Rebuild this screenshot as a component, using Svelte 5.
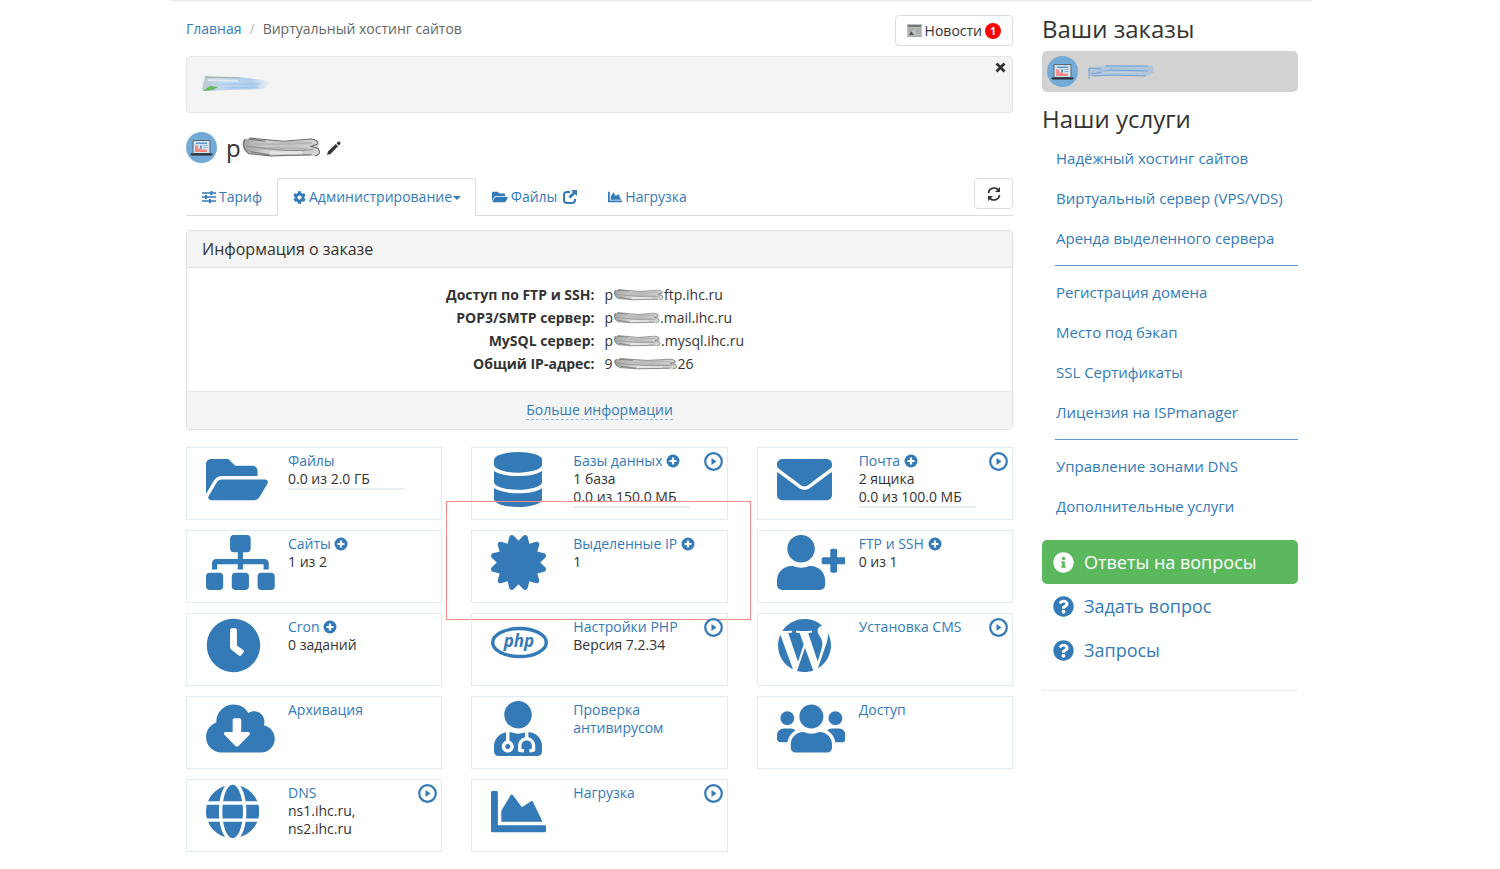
<script lang="ts">
  const icons = {
    folder: {
      w: 576,
      d: "M572.694 292.093L500.27 416.248A63.997 63.997 0 0 1 444.989 448H45.025c-18.523 0-30.064-20.093-20.731-36.093l72.424-124.155A64 64 0 0 1 152 256h399.964c18.523 0 30.064 20.093 20.73 36.093zM152 224h328v-48c0-26.51-21.49-48-48-48H272l-64-64H48C21.49 64 0 85.49 0 112v278.046l69.077-118.418C86.214 242.25 117.989 224 152 224z",
    },
    database: {
      w: 448,
      d: "M448 73.143v45.714C448 159.143 347.667 192 224 192S0 159.143 0 118.857V73.143C0 32.857 100.333 0 224 0s224 32.857 224 73.143zM448 176v102.857C448 319.143 347.667 352 224 352S0 319.143 0 278.857V176c48.125 33.143 136.208 48.572 224 48.572S399.874 209.143 448 176zm0 160v102.857C448 479.143 347.667 512 224 512S0 479.143 0 438.857V336c48.125 33.143 136.208 48.572 224 48.572S399.874 369.143 448 336z",
    },
    envelope: {
      w: 512,
      d: "M502.3 190.8c3.9-3.1 9.7-.2 9.7 4.7V400c0 26.5-21.5 48-48 48H48c-26.5 0-48-21.5-48-48V195.6c0-5 5.7-7.8 9.7-4.7 22.4 17.4 52.1 39.5 154.1 113.6 21.1 15.4 56.7 47.8 92.2 47.6 35.7.3 72-32.8 92.3-47.6 102-74.1 131.6-96.3 154-113.7zM256 320c23.2.4 56.6-29.2 73.4-41.4 132.7-96.3 142.8-104.7 173.4-128.7 5.8-4.5 9.2-11.5 9.2-18.9v-19c0-26.5-21.5-48-48-48H48c-26.5 0-48 21.5-48 48v19c0 7.4 3.4 14.3 9.2 18.9 30.6 23.9 40.7 32.4 173.4 128.7 16.8 12.2 50.2 41.8 73.4 41.4z",
    },
    sitemap: {
      w: 640,
      d: "M128 352H32c-17.67 0-32 14.33-32 32v96c0 17.67 14.33 32 32 32h96c17.67 0 32-14.33 32-32v-96c0-17.67-14.33-32-32-32zm-24-80h192v48h48v-48h192v48h48v-57.59c0-21.17-17.23-38.41-38.41-38.41H344v-64h40c17.67 0 32-14.33 32-32V32c0-17.67-14.33-32-32-32H256c-17.67 0-32 14.33-32 32v96c0 17.67 14.33 32 32 32h40v64H94.41C73.23 224 56 241.23 56 262.41V320h48v-48zm264 80h-96c-17.67 0-32 14.33-32 32v96c0 17.67 14.33 32 32 32h96c17.67 0 32-14.33 32-32v-96c0-17.67-14.33-32-32-32zm240 0h-96c-17.67 0-32 14.33-32 32v96c0 17.67 14.33 32 32 32h96c17.67 0 32-14.33 32-32v-96c0-17.67-14.33-32-32-32z",
    },
    certificate: {
      w: 512,
      d: "M458.622 255.92l45.985-45.005c13.708-12.977 7.316-36.039-10.664-40.339l-62.65-15.99 17.661-62.015c4.991-17.838-11.829-34.663-29.661-29.671l-61.994 17.667-15.984-62.671C337.085.197 313.765-6.276 300.99 7.228L256 53.57 211.011 7.229c-12.63-13.351-36.047-7.234-40.325 10.668l-15.984 62.671-61.995-17.667C74.87 57.907 58.056 74.738 63.046 92.572l17.661 62.015-62.65 15.99C.069 174.878-6.31 197.944 7.392 210.915l45.985 45.005-45.985 45.004c-13.708 12.977-7.316 36.039 10.664 40.339l62.65 15.99-17.661 62.015c-4.991 17.838 11.829 34.663 29.661 29.671l61.994-17.667 15.984 62.671c4.439 18.575 27.696 24.018 40.325 10.668L256 458.61l44.989 46.001c12.5 13.488 35.987 7.486 40.325-10.668l15.984-62.671 61.994 17.667c17.836 4.994 34.651-11.837 29.661-29.671l-17.661-62.015 62.65-15.99c17.987-4.302 24.366-27.367 10.664-40.339l-45.984-45.004z",
    },
    userPlus: {
      w: 640,
      d: "M624 208h-64v-64c0-8.8-7.2-16-16-16h-32c-8.8 0-16 7.2-16 16v64h-64c-8.8 0-16 7.2-16 16v32c0 8.8 7.2 16 16 16h64v64c0 8.8 7.2 16 16 16h32c8.8 0 16-7.2 16-16v-64h64c8.8 0 16-7.2 16-16v-32c0-8.8-7.2-16-16-16zm-400 48c70.7 0 128-57.3 128-128S294.7 0 224 0 96 57.3 96 128s57.3 128 128 128zm89.6 32h-16.7c-22.2 10.2-46.9 16-72.9 16s-50.6-5.8-72.9-16h-16.7C60.2 288 0 348.2 0 422.4V464c0 26.5 21.5 48 48 48h352c26.5 0 48-21.5 48-48v-41.6c0-74.2-60.2-134.4-134.4-134.4z",
    },
    clock: {
      w: 512,
      d: "M256,8C119,8,8,119,8,256S119,504,256,504,504,393,504,256,393,8,256,8Zm92.49,313h0l-20,25a16,16,0,0,1-22.49,2.5h0l-67-49.72a40,40,0,0,1-15-31.23V112a16,16,0,0,1,16-16h32a16,16,0,0,1,16,16V256l58,42.5A16,16,0,0,1,348.49,321Z",
    },
    wordpress: {
      w: 512,
      box: "35 35 442 442",
      d: "M61.7 169.4l101.5 278C92.2 413 43.3 340.2 43.3 256c0-30.9 6.6-60.1 18.4-86.6zm337.9 75.9c0-26.3-9.4-44.5-17.5-58.7-10.8-17.5-20.9-32.4-20.9-49.9 0-19.6 14.8-37.8 35.7-37.8.9 0 1.8.1 2.8.2-37.9-34.7-88.3-55.9-143.7-55.9-74.3 0-139.7 38.1-177.8 95.9 5 .2 9.7.3 13.7.3 22.2 0 56.7-2.7 56.7-2.7 11.5-.7 12.8 16.2 1.4 17.5 0 0-11.5 1.3-24.3 2l77.5 230.4L249.8 247l-33.1-90.8c-11.5-.7-22.3-2-22.3-2-11.5-.7-10.1-18.2 1.3-17.5 0 0 35.1 2.7 56 2.7 22.2 0 56.7-2.7 56.7-2.7 11.5-.7 12.8 16.2 1.4 17.5 0 0-11.5 1.3-24.3 2l76.9 228.7 21.2-70.9c9-29.4 16-50.5 16-68.7zm-139.9 29.3l-63.8 185.5c19.1 5.6 39.2 8.7 60.1 8.7 24.8 0 48.5-4.3 70.6-12.1-.6-.9-1.1-1.9-1.5-2.9l-65.4-179.2zm183-120.7c.9 6.8 1.4 14 1.4 21.9 0 21.6-4 45.8-16.2 76.2l-65 187.9C426.2 403 468.7 334.5 468.7 256c0-37-9.4-71.8-26-102.1z",
    },
    cloud: {
      w: 640,
      d: "M537.6 226.6c4.1-10.7 6.4-22.4 6.4-34.6 0-53-43-96-96-96-19.7 0-38.1 6-53.3 16.2C367 64.2 315.3 32 256 32c-88.4 0-160 71.6-160 160 0 2.7.1 5.4.2 8.1C40.2 219.8 0 273.2 0 336c0 79.5 64.5 144 144 144h368c70.7 0 128-57.3 128-128 0-61.9-44-113.6-102.4-125.4zm-132.9 88.7L299.3 420.7c-6.2 6.2-16.4 6.2-22.6 0L171.3 315.3c-10.1-10.1-2.9-27.3 11.3-27.3H248V176c0-8.8 7.2-16 16-16h48c8.8 0 16 7.2 16 16v112h65.4c14.2 0 21.4 17.2 11.3 27.3z",
    },
    doctor: {
      w: 448,
      d: "M224 256c70.7 0 128-57.3 128-128S294.7 0 224 0 96 57.3 96 128s57.3 128 128 128zM104 424c0 13.3 10.7 24 24 24s24-10.7 24-24-10.7-24-24-24-24 10.7-24 24zm216-135.4v49c36.5 7.4 64 39.8 64 78.4v41.7c0 7.6-5.4 14.2-12.9 15.7l-32.2 6.4c-4.3.9-8.5-1.9-9.4-6.3l-3.1-15.7c-.9-4.3 1.9-8.6 6.3-9.4l19.3-3.9V416c0-62.8-96-65.1-96 1.9v26.7l19.3 3.9c4.3.9 7.1 5.1 6.3 9.4l-3.1 15.7c-.9 4.3-5.1 7.1-9.4 6.3l-31.2-4.2c-7.9-1.1-13.8-7.8-13.8-15.9V416c0-38.6 27.5-70.9 64-78.4v-45.2c-2.2.7-4.4 1.1-6.6 1.9-18 6.3-37.3 9.8-57.4 9.8s-39.4-3.5-57.4-9.8c-7.4-2.6-14.9-4.2-22.6-5.2v81.6c23.1 6.9 40 28.1 40 53.4 0 30.9-25.1 56-56 56s-56-25.1-56-56c0-25.3 16.9-46.5 40-53.4v-80.4C48.5 301 0 355.8 0 422.4v44.8C0 491.9 20.1 512 44.8 512h358.4c24.7 0 44.8-20.1 44.8-44.8v-44.8c0-72-56.8-130.3-128-133.8z",
    },
    users: {
      w: 640,
      d: "M96 224c35.3 0 64-28.7 64-64s-28.7-64-64-64-64 28.7-64 64 28.7 64 64 64zm448 0c35.3 0 64-28.7 64-64s-28.7-64-64-64-64 28.7-64 64 28.7 64 64 64zm32 32h-64c-17.6 0-33.5 7.1-45.1 18.6 40.3 22.1 68.9 62 75.1 109.4h66c17.7 0 32-14.3 32-32v-32c0-35.3-28.7-64-64-64zm-256 0c61.9 0 112-50.1 112-112S381.9 32 320 32 208 82.1 208 144s50.1 112 112 112zm76.8 32h-8.3c-20.8 10-43.9 16-68.5 16s-47.6-6-68.5-16h-8.3C179.6 288 128 339.6 128 403.2V432c0 26.5 21.5 48 48 48h288c26.5 0 48-21.5 48-48v-28.8c0-63.6-51.6-115.2-115.2-115.2zm-223.7-13.4C161.5 263.1 145.6 256 128 256H64c-35.3 0-64 28.7-64 64v32c0 17.7 14.3 32 32 32h65.9c6.3-47.4 34.9-87.3 75.2-109.4z",
    },
    globe: {
      w: 496,
      d: "M336.5 160C322 70.7 287.8 8 248 8s-74 62.7-88.5 152h177zM152 256c0 22.2 1.2 43.5 3.3 64h185.3c2.1-20.5 3.3-41.8 3.3-64s-1.2-43.5-3.3-64H155.3c-2.1 20.5-3.3 41.8-3.3 64zm324.7-96c-28.6-67.9-86.5-120.4-158-141.6 24.4 33.8 41.2 84.7 50 141.6h108zM177.2 18.4C105.8 39.6 47.8 92.1 19.3 160h108c8.7-56.9 25.5-107.8 49.9-141.6zM487.4 192H372.7c2.1 21 3.3 42.5 3.3 64s-1.2 43-3.3 64h114.6c5.5-20.5 8.6-41.8 8.6-64s-3.1-43.5-8.5-64zM120 256c0-21.5 1.2-43 3.3-64H8.6C3.2 212.5 0 233.8 0 256s3.2 43.5 8.6 64h114.6c-2-21-3.2-42.5-3.2-64zm39.5 96c14.5 89.3 48.7 152 88.5 152s74-62.7 88.5-152h-177zm159.3 141.6c71.4-21.2 129.4-73.7 158-141.6h-108c-8.8 56.9-25.6 107.8-50 141.6zM19.3 352c28.6 67.9 86.5 120.4 158 141.6-24.4-33.8-41.2-84.7-50-141.6h-108z",
    },
    chart: {
      w: 512,
      d: "M500 384c6.6 0 12 5.4 12 12v40c0 6.6-5.4 12-12 12H12c-6.6 0-12-5.4-12-12V76c0-6.6 5.4-12 12-12h40c6.6 0 12 5.4 12 12v308h436zM372.7 159.5L288 216l-85.3-113.7c-5.1-6.8-15.5-6.3-19.9 1L96 248v104h384l-89.9-187.8c-3.2-6.5-11.4-8.7-17.4-4.7z",
    },
    cog: {
      w: 512,
      d: "M487.4 315.7l-42.6-24.6c4.3-23.2 4.3-47 0-70.2l42.6-24.6c4.9-2.8 7.1-8.6 5.5-14-11.1-35.6-30-67.8-54.7-94.6-3.8-4.1-10-5.1-14.8-2.3L380.8 110c-17.9-15.4-38.5-27.3-60.8-35.1V25.8c0-5.6-3.9-10.5-9.4-11.7-36.7-8.2-74.3-7.8-109.2 0-5.5 1.2-9.4 6.1-9.4 11.7V75c-22.2 7.9-42.8 19.8-60.8 35.1L88.7 85.5c-4.9-2.8-11-1.9-14.8 2.3-24.7 26.7-43.6 58.9-54.7 94.6-1.7 5.4.6 11.2 5.5 14L67.3 221c-4.3 23.2-4.3 47 0 70.2l-42.6 24.6c-4.9 2.8-7.1 8.6-5.5 14 11.1 35.6 30 67.8 54.7 94.6 3.8 4.1 10 5.1 14.8 2.3l42.6-24.6c17.9 15.4 38.5 27.3 60.8 35.1v49.2c0 5.6 3.9 10.5 9.4 11.7 36.7 8.2 74.3 7.8 109.2 0 5.5-1.2 9.4-6.1 9.4-11.7v-49.2c22.2-7.9 42.8-19.8 60.8-35.1l42.6 24.6c4.9 2.8 11 1.9 14.8-2.3 24.7-26.7 43.6-58.9 54.7-94.6 1.5-5.5-.7-11.3-5.6-14.1zM256 336c-44.1 0-80-35.9-80-80s35.9-80 80-80 80 35.9 80 80-35.9 80-80 80z",
    },
    question: {
      w: 512,
      d: "M504 256c0 136.997-111.043 248-248 248S8 392.997 8 256C8 119.083 119.043 8 256 8s248 111.083 248 248zM262.655 90c-54.497 0-89.255 22.957-116.549 63.758-3.536 5.286-2.353 12.415 2.715 16.258l34.699 26.31c5.205 3.947 12.621 3.008 16.665-2.122 17.864-22.658 30.113-35.797 57.303-35.797 20.429 0 45.698 13.148 45.698 32.958 0 14.976-12.363 22.667-32.534 33.976C247.128 238.528 216 254.941 216 296v4c0 6.627 5.373 12 12 12h56c6.627 0 12-5.373 12-12v-1.333c0-28.462 83.186-29.647 83.186-106.667 0-58.002-60.165-102-116.531-102zM256 338c-25.365 0-46 20.635-46 46 0 25.364 20.635 46 46 46s46-20.636 46-46c0-25.365-20.635-46-46-46z",
    },
    info: {
      w: 512,
      d: "M256 8C119.043 8 8 119.083 8 256c0 136.997 111.043 248 248 248s248-111.003 248-248C504 119.083 392.957 8 256 8zm0 110c23.196 0 42 18.804 42 42s-18.804 42-42 42-42-18.804-42-42 18.804-42 42-42zm56 254c0 6.627-5.373 12-12 12h-88c-6.627 0-12-5.373-12-12v-24c0-6.627 5.373-12 12-12h12v-64h-12c-6.627 0-12-5.373-12-12v-24c0-6.627 5.373-12 12-12h64c6.627 0 12 5.373 12 12v100h12c6.627 0 12 5.373 12 12v24z",
    },
  };

  const tiles = [
    { icon: "folder", title: "Файлы", lines: ["0.0 из 2.0 ГБ"], bar: true },
    { icon: "database", title: "Базы данных", add: true, play: true, lines: ["1 база", "0.0 из 150.0 МБ"], bar: true },
    { icon: "envelope", title: "Почта", add: true, play: true, lines: ["2 ящика", "0.0 из 100.0 МБ"], bar: true },
    { icon: "sitemap", title: "Сайты", add: true, lines: ["1 из 2"] },
    { icon: "certificate", title: "Выделенные IP", add: true, lines: ["1"], marked: true },
    { icon: "userPlus", title: "FTP и SSH", add: true, lines: ["0 из 1"] },
    { icon: "clock", title: "Cron", add: true, lines: ["0 заданий"] },
    { icon: "php", title: "Настройки PHP", play: true, lines: ["Версия 7.2.34"] },
    { icon: "wordpress", title: "Установка CMS", play: true, lines: [] },
    { icon: "cloud", title: "Архивация", lines: [] },
    { icon: "doctor", title: "Проверка антивирусом", lines: [] },
    { icon: "users", title: "Доступ", lines: [] },
    { icon: "globe", title: "DNS", play: true, lines: ["ns1.ihc.ru,", "ns2.ihc.ru"] },
    { icon: "chart", title: "Нагрузка", play: true, lines: [] },
  ];

  const access = [
    { label: "Доступ по FTP и SSH:", start: "p", width: 51, end: "ftp.ihc.ru" },
    { label: "POP3/SMTP сервер:", start: "p", width: 47, end: ".mail.ihc.ru" },
    { label: "MySQL сервер:", start: "p", width: 48, end: ".mysql.ihc.ru" },
    { label: "Общий IP-адрес:", start: "9", width: 65, end: "26" },
  ];

  const services = [
    ["Надёжный хостинг сайтов", "Виртуальный сервер (VPS/VDS)", "Аренда выделенного сервера"],
    ["Регистрация домена", "Место под бэкап", "SSL Сертификаты", "Лицензия на ISPmanager"],
    ["Управление зонами DNS", "Дополнительные услуги"],
  ];

  let noticeOpen = $state(true);
</script>

{#snippet icon(name, size)}
  {@const item = icons[name]}
  <svg
    viewBox={item.box ?? `0 0 ${item.w} 512`}
    width={(size * item.w) / 512}
    height={size}
    fill="currentColor"
    aria-hidden="true"
  >
    <path d={item.d} />
  </svg>
{/snippet}

{#snippet laptop()}
  <svg viewBox="0 0 31 31" width="31" height="31" aria-hidden="true">
    <circle cx="15.5" cy="15.5" r="15.5" fill="#74abd6" />
    <rect x="6.5" y="8" width="18" height="14" rx="1" fill="#5d656d" />
    <rect x="7.5" y="9" width="16" height="12" fill="#d3e3f0" />
    <path d="M10 10.5h11v1.5H10zM14 13.5h2v3h-2z" fill="#5f97cf" />
    <path d="M9 13.5h3v3h4v1h5v2.500H9z" fill="#f58a84" />
    <path d="M17.500 13.5h4M17.500 15.500h4" stroke="#8fb6dc" />
    <path d="M4.500 21.500h22v1l-1 1h-20l-1-1z" fill="#27313b" />
  </svg>
{/snippet}

<!-- brush strokes that hide the account name -->
{#snippet smear(width, height)}
  <svg class="smear" viewBox="0 0 80 20" {width} {height} preserveAspectRatio="none" aria-hidden="true">
    <path d="M2 3Q0 12 8 16L30 18L76 18Q82 13 76 10Q82 6 74 2L42 4L9 1Z" fill="url(#brush)" />
    <g fill="none" stroke-linecap="round">
      <path d="M10 6C30 9 50 5 70 6M14 12C34 8 50 12 66 11" stroke="#b4b6b4" stroke-width="2" />
      <path d="M30 15L60 15" stroke="#e4e6e4" stroke-width="3" />
      <path d="M6 9C24 10 43 15 72 12" stroke="#8c8f8c" />
      <path d="M9 1L42 4L70 2Q78 3 76 7L70 9L77 11Q81 17 74 18" stroke="#6a6d6a" />
      <path d="M4 2Q0 10 8 16L30 18L70 17M8 2L24 4M10 14L28 17" stroke="#6a6d6a" />
    </g>
  </svg>
{/snippet}

<svg width="0" height="0" class="defs" aria-hidden="true">
  <defs>
    <linearGradient id="brush">
      <stop offset="0" stop-color="#9da09d" />
      <stop offset=".3" stop-color="#cfd1cf" />
      <stop offset=".6" stop-color="#bfc2bf" />
      <stop offset="1" stop-color="#d6d8d6" />
    </linearGradient>
    <linearGradient id="fade">
      <stop offset="0" stop-color="#bccad0" />
      <stop offset=".3" stop-color="#c3d8ec" />
      <stop offset=".7" stop-color="#aecdec" />
      <stop offset="1" stop-color="#b9d3ed" stop-opacity="0" />
    </linearGradient>
  </defs>
</svg>

<div class="page">
  <div class="container">
    <main>
      <header>
        <nav class="breadcrumb" aria-label="Навигация">
          <a href="#home">Главная</a><span class="slash">/</span><span>Виртуальный хостинг сайтов</span>
        </nav>
        <button class="btn news">
          <svg viewBox="0 0 15 13" width="15" height="13" aria-hidden="true">
            <path d="M0 0h15v13H0z" fill="#bfc1c1" />
            <path d="M1 1h13v2H1z" fill="#727474" />
            <path d="M1 5h7M1 7h3M9 5h5M9 7h5M9 9h5M1 12h13" stroke="#989a9a" />
            <path d="M2 11l2-4 3 4z" fill="#505252" />
          </svg>
          Новости <span class="count">1</span>
        </button>
      </header>

      {#if noticeOpen}
        <div class="notice">
          <svg viewBox="0 0 70 16" width="70" height="16" aria-hidden="true">
            <path d="M3 0L38 1L60 4L70 6L62 13L30 14L2 15L0 13Z" fill="url(#fade)" />
            <path d="M3 1L38 2" stroke="#a3b3a6" />
            <path d="M6 4L36 5" stroke="#dfe9f2" stroke-width="2" />
            <path d="M1 15L8 10L16 11L11 14Z" fill="#61bd59" />
            <path d="M23 12L56 11M20 8L58 8" stroke="#9cc3e8" />
          </svg>
          <button class="close" aria-label="Закрыть" onclick={() => (noticeOpen = false)}>
            <svg viewBox="0 0 11 11" width="11" height="11" aria-hidden="true">
              <path d="M1.500 1.500l8 8M9.500 1.500l-8 8" stroke="#333" stroke-width="2.800" />
            </svg>
          </button>
        </div>
      {/if}

      <div class="account">
        {@render laptop()}
        <h1>p{@render smear(80, 21)}</h1>
        <button class="edit" aria-label="Переименовать">
          <svg viewBox="0 0 14 14" width="14" height="14" fill="#333" aria-hidden="true">
            <path d="M0 14l1-3.500L8.800 3l2.200 2.200L3.500 13zM9.600 2.200L11 .8q.8-.8 1.600 0l.6.6q.8.8 0 1.600l-1.400 1.400z" />
          </svg>
        </button>
      </div>

      <nav class="tabs" aria-label="Разделы">
        <a href="#tariff">
          <svg viewBox="0 0 14 12" width="14" height="12" aria-hidden="true">
            <path d="M0 2h14M0 6h14M0 10h14" stroke="currentColor" stroke-width="1.700" />
            <path d="M9.500 0v4M4 4v4M8 8v4" stroke="currentColor" stroke-width="2" />
          </svg>
          Тариф
        </a>
        <a href="#admin" class="active" aria-current="page">
          {@render icon("cog", 13)}
          <span>Администрирование<span class="caret"></span></span>
        </a>
        <a href="#files">
          {@render icon("folder", 14)}
          Файлы
          <svg class="external" viewBox="0 0 14 14" width="14" height="14" aria-hidden="true">
            <path d="M7 2H4Q1 2 1 5v5q0 3 3 3h5q3 0 3-3V9" fill="none" stroke="currentColor" stroke-width="2" />
            <path d="M8 0h6v6l-2-2-4.500 4.500-2-2L10 2z" fill="currentColor" />
          </svg>
        </a>
        <a href="#load">
          {@render icon("chart", 14)}
          Нагрузка
        </a>
        <button class="btn refresh" aria-label="Обновить">
          <svg viewBox="0 0 14 14" width="14" height="14" fill="none" stroke="#333" stroke-width="1.700" aria-hidden="true">
            <path d="M1.500 6A5.600 5.600 0 0 1 12 4M12.500 8A5.600 5.600 0 0 1 2 10" />
            <path d="M13 0v5H8zM1 14V9h5z" fill="#333" stroke="none" />
          </svg>
        </button>
      </nav>

      <section class="panel">
        <h2>Информация о заказе</h2>
        <dl>
          {#each access as row}
            <dt>{row.label}</dt>
            <dd>{row.start}{@render smear(row.width, 12)}{row.end}</dd>
          {/each}
        </dl>
        <footer><a href="#more">Больше информации</a></footer>
      </section>

      <section class="tiles">
        {#each tiles as tile}
          <article class="tile" class:marked={tile.marked}>
            <div class="picture" class:narrow={icons[tile.icon]?.w === 448}>
              {#if tile.icon === "php"}
                <svg class="php" viewBox="0 0 57 49" width="57" height="49" aria-hidden="true">
                  <ellipse cx="28.500" cy="24.500" rx="26.800" ry="14" fill="none" stroke="currentColor" stroke-width="3.400" />
                  <text x="28" y="29" text-anchor="middle">php</text>
                </svg>
              {:else}
                {@render icon(tile.icon, 55)}
              {/if}
            </div>
            <div class="text">
              <a href="#{tile.icon}">{tile.title}</a>
              {#if tile.add}
                <button class="add" aria-label="Добавить">
                  <svg viewBox="0 0 14 14" width="14" height="14" aria-hidden="true">
                    <circle cx="7" cy="7" r="6.500" fill="currentColor" />
                    <path d="M7 3.500v7M3.500 7h7" stroke="#fff" stroke-width="2.200" />
                  </svg>
                </button>
              {/if}
              {#each tile.lines as line}
                <div>{line}</div>
              {/each}
              {#if tile.bar}
                <div class="bar"></div>
              {/if}
            </div>
            {#if tile.play}
              <button class="play" aria-label="Видео">
                <svg viewBox="0 0 19 19" width="19" height="19" aria-hidden="true">
                  <circle cx="9.500" cy="9.500" r="8.300" fill="none" stroke="currentColor" stroke-width="2.200" />
                  <path d="M7.500 6v7l5-3.500z" fill="currentColor" />
                </svg>
              </button>
            {/if}
          </article>
        {/each}
      </section>
    </main>

    <aside>
      <h2>Ваши заказы</h2>
      <a class="order" href="#order" aria-label="Заказ">
        {@render laptop()}
        <svg viewBox="0 0 66 14" width="66" height="14" aria-hidden="true">
          <path d="M0 3L20 0L65 1L66 8L58 11L2 11Z" fill="#a9c3dc" opacity=".8" />
          <path d="M1 14V3L13 4M3 9L24 5L60 6M4 11L25 10L58 11M18 1H60" fill="none" stroke="#6ba3d6" />
          <path d="M14 7L54 8" stroke="#c6d2dd" />
        </svg>
      </a>
      <h2>Наши услуги</h2>
      {#each services as group}
        <ul>
          {#each group as name}
            <li><a href="#service">{name}</a></li>
          {/each}
        </ul>
      {/each}
      <nav class="help" aria-label="Помощь">
        <a class="answers" href="#faq">{@render icon("info", 21)}Ответы на вопросы</a>
        <a href="#ask">{@render icon("question", 21)}Задать вопрос</a>
        <a href="#tickets">{@render icon("question", 21)}Запросы</a>
      </nav>
    </aside>
  </div>
</div>

<style>
  :global(body) {
    background: #fff;
  }

  .page {
    padding-right: 17px;

    font-family: "Open Sans", "Noto Sans", sans-serif;
    font-size: 14px;
    line-height: 20px;
    color: #333;
  }

  .container {
    display: grid;
    grid-template-columns: minmax(0, 1fr) 256px;
    gap: 29px;
    max-width: 1141px;
    margin: 0 auto;
    padding: 0 14px 0 15px;
    border-top: 1px solid #e9e9e9;
    box-sizing: border-box;
  }

  a {
    color: #337ab7;
    text-decoration: none;
  }

  button {
    padding: 0;
    border: none;
    background: transparent;

    font: inherit;
    color: inherit;
    cursor: pointer;
  }

  svg {
    display: block;
    flex: none;
  }

  .defs {
    position: absolute;
  }

  h1,
  h2 {
    margin: 0;
    font-weight: 400;
  }

  main {
    padding: 14px 0 17px;
  }

  header {
    display: flex;
    justify-content: space-between;
    align-items: flex-start;
  }

  .breadcrumb {
    padding-top: 4px;
    color: #666;
  }

  .slash {
    padding: 0 8px;
    color: #bbb;
  }

  .btn {
    display: flex;
    justify-content: center;
    align-items: center;
    gap: 3px;
    height: 31px;
    border: 1px solid #ddd;
    border-radius: 4px;
    background: #fff;
    box-sizing: border-box;
  }

  .news {
    padding: 0 11px;
  }

  .count {
    width: 16px;
    border-radius: 8px;
    background: #f00;

    font-size: 10px;
    font-weight: 700;
    line-height: 16px;
    text-align: center;
    color: #fff;
  }

  .notice {
    display: flex;
    justify-content: space-between;
    align-items: flex-start;
    margin-top: 10px;
    padding: 5px 6px 20px 15px;
    border: 1px solid #e6e6e6;
    border-radius: 4px;
    background: #f4f4f4;
  }

  .notice > svg {
    margin-top: 14px;
  }

  .close {
    display: flex;
  }

  .account {
    display: flex;
    align-items: center;
    height: 31px;
    margin: 19px 0 15px;
  }

  h1 {
    display: flex;
    align-items: center;
    margin: 0 6px 0 9px;
    font-size: 24px;
    line-height: 30px;
  }

  .tabs {
    display: flex;
    align-items: flex-start;
    border-bottom: 1px solid #ddd;
  }

  .tabs a {
    display: flex;
    align-items: center;
    gap: 3px;
    height: 38px;
    margin-bottom: -1px;
    padding: 0 14px 0 15px;
    border: 1px solid transparent;
    border-radius: 4px 4px 0 0;
    box-sizing: border-box;
  }

  .tabs .active {
    border-color: #ddd #ddd #fff;
    background: #fff;
  }

  .caret {
    display: inline-block;
    margin-left: 1px;
    border-top: 4px solid;
    border-right: 4px solid transparent;
    border-left: 4px solid transparent;
    vertical-align: middle;
  }

  .external {
    margin-left: 3px;
  }

  .refresh {
    width: 39px;
    margin-left: auto;
  }

  .panel {
    margin: 14px 0 17px;
    border: 1px solid #e0e0e0;
    border-radius: 4px;
  }

  .panel h2 {
    padding: 8px 15px;
    border-bottom: 1px solid #e0e0e0;
    background: #f4f4f4;

    font-size: 16px;
    line-height: 20px;
  }

  dl {
    display: grid;
    grid-template-columns: 1fr 1fr;
    column-gap: 10px;
    margin: 0;
    padding: 15px 0 16px;
    line-height: 23px;
  }

  dt {
    font-weight: 700;
    text-align: right;
  }

  dd {
    display: flex;
    align-items: center;
    margin: 0;
  }

  .panel footer {
    padding: 8px 0 9px;
    border-top: 1px solid #e6e6e6;
    background: #f4f4f4;
    text-align: center;
  }

  .panel footer a {
    border-bottom: 1px dashed #8fb8dc;
  }

  .tiles {
    display: grid;
    grid-template-columns: repeat(3, 1fr);
    gap: 10px 29px;
  }

  .tile {
    position: relative;
    display: flex;
    align-items: flex-start;
    min-height: 73px;
    padding: 4px 4px 4px 19px;
    border: 1px solid #dfebf5;
    box-sizing: border-box;

    line-height: 18px;
  }

  /* red frame around the highlighted tile */
  .marked::after {
    content: "";
    position: absolute;
    inset: -30px -24px -18px -26px;
    border: 1px solid #f88;
    pointer-events: none;
  }

  .picture {
    width: 82px;
    color: #337ab7;
    box-sizing: border-box;
  }

  .narrow {
    padding-left: 3px;
  }

  .php text {
    font-size: 17px;
    font-style: italic;
    font-weight: 700;
    fill: currentColor;
  }

  .text {
    width: 122px;
  }

  .add {
    display: inline-block;
    color: #337ab7;
    vertical-align: -2px;
  }

  .bar {
    width: 117px;
    height: 2px;
    background: #e6eef5;
  }

  .play {
    margin-left: auto;
    color: #337ab7;
  }

  aside {
    padding-top: 12px;
  }

  aside h2 {
    font-size: 24px;
    line-height: 32px;
  }

  .order {
    display: flex;
    align-items: center;
    gap: 10px;
    height: 41px;
    margin: 6px 0 11px;
    padding: 0 5px;
    border-radius: 5px;
    background: #d2d2d2;
    box-sizing: border-box;
  }

  ul {
    margin: 0 0 0 13px;
    padding: 0;
    list-style: none;
  }

  ul + ul {
    margin-top: 7px;
    padding-top: 6px;
    border-top: 1px solid #5f97c7;
  }

  h2 + ul {
    margin-top: 3px;
  }

  li a {
    display: block;
    padding: 10px 1px;
    font-size: 15px;
  }

  .help {
    margin-top: 14px;
    padding-bottom: 18px;
    border-bottom: 1px solid #eee;
  }

  .help a {
    display: flex;
    align-items: center;
    gap: 10px;
    height: 44px;
    padding: 0 11px;
    font-size: 18px;
  }

  .help .answers {
    border-radius: 5px;
    background: #5cb85c;
    color: #fff;
  }
</style>
